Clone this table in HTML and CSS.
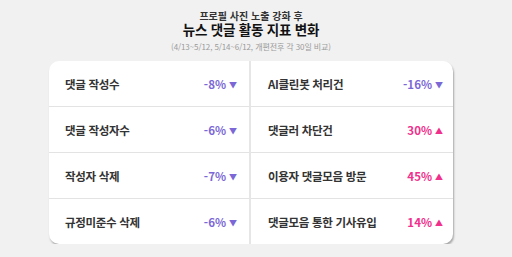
FILE: index.html
```html
<!DOCTYPE html>
<html lang="ko">
<head>
<meta charset="utf-8">
<link rel="stylesheet" href="styles.css">
</head>
<body>
<div class="wrap">
  <header class="head">
    <div class="pre">프로필 사진 노출 강화 후</div>
    <h1 class="title">뉴스 댓글 활동 지표 변화</h1>
    <div class="sub">(4/13~5/12, 5/14~6/12, 개편전후 각 30일 비교)</div>
  </header>
  <div class="card">
    <div class="cell"><span class="label">댓글 작성수</span><span class="val down">-8%<i class="tri">▼</i></span></div>
    <div class="cell right"><span class="label">AI클린봇 처리건</span><span class="val down">-16%<i class="tri">▼</i></span></div>
    <div class="cell"><span class="label">댓글 작성자수</span><span class="val down">-6%<i class="tri">▼</i></span></div>
    <div class="cell right"><span class="label">댓글러 차단건</span><span class="val up">30%<i class="tri">▲</i></span></div>
    <div class="cell"><span class="label">작성자 삭제</span><span class="val down">-7%<i class="tri">▼</i></span></div>
    <div class="cell right"><span class="label">이용자 댓글모음 방문</span><span class="val up">45%<i class="tri">▲</i></span></div>
    <div class="cell last"><span class="label">규정미준수 삭제</span><span class="val down">-6%<i class="tri">▼</i></span></div>
    <div class="cell right last"><span class="label">댓글모음 통한 기사유입</span><span class="val up">14%<i class="tri">▲</i></span></div>
  </div>
</div>
</body>
</html>
```
FILE: styles.css
```css
html, body {
  margin: 0;
  padding: 0;
  background: #f1f1f1;
}
body {
  font-family: "Noto Sans CJK KR", "Noto Sans", sans-serif;
  color: #333;
}
.wrap {
  width: 404px;
  margin-left: 49px;
  padding-top: 9px;
}
.head {
  text-align: center;
}
.pre {
  font-size: 10px;
  font-weight: 700;
  line-height: 13px;
  color: #333;
}
.title {
  margin: 0;
  font-size: 13.5px;
  font-weight: 700;
  line-height: 15px;
  color: #111;
  letter-spacing: -0.2px;
}
.sub {
  margin-top: 4px;
  font-size: 8px;
  line-height: 12px;
  color: #9a9a9a;
  letter-spacing: -0.1px;
}
.card {
  margin-top: 8px;
  background: #fff;
  border-radius: 10px;
  box-shadow: 1px 2px 2px rgba(0, 0, 0, 0.3);
  display: grid;
  grid-template-columns: 1fr 1fr;
  overflow: hidden;
}
.cell {
  height: 44px;
  display: flex;
  align-items: center;
  justify-content: space-between;
  padding: 1px 12px 0 16px;
  border-bottom: 1px solid #e3e3e3;
  border-right: 2px solid #e6e6e6;
}
.cell.right {
  border-right: none;
  padding: 1px 10px 0 17px;
}
.cell.last {
  border-bottom: none;
}
.label {
  font-size: 11.5px;
  font-weight: 700;
  color: #333;
  letter-spacing: -0.3px;
}
.val {
  font-size: 11.5px;
  font-weight: 600;
  display: flex;
  align-items: center;
  gap: 3px;
}
.tri {
  font-style: normal;
  font-size: 8px;
}
.down {
  color: #7b68d6;
}
.up {
  color: #f0308c;
}
```
